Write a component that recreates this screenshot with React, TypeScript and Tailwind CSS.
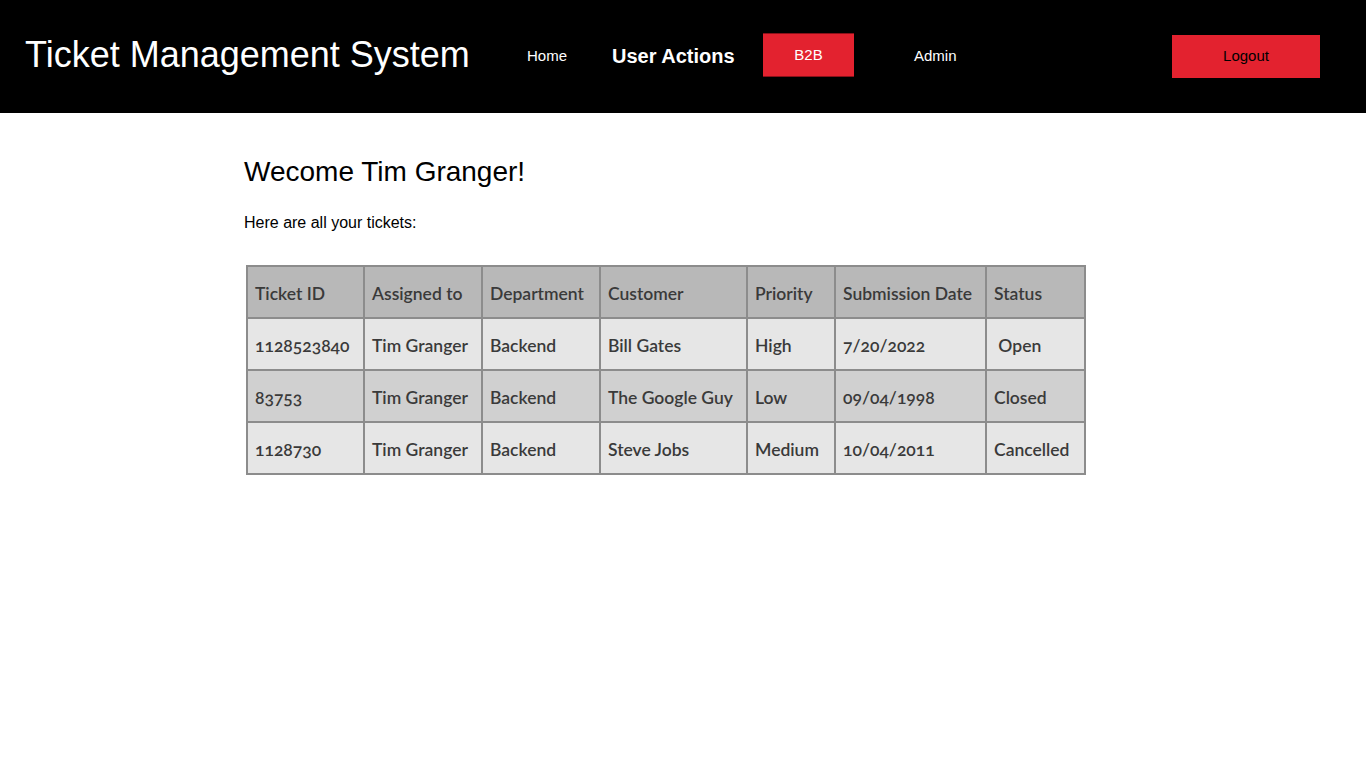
import React from "react";

const rows = [
  ["1128523840", "Tim Granger", "Backend", "Bill Gates", "High", "7/20/2022", " Open"],
  ["83753", "Tim Granger", "Backend", "The Google Guy", "Low", "09/04/1998", "Closed"],
  ["1128730", "Tim Granger", "Backend", "Steve Jobs", "Medium", "10/04/2011", "Cancelled"],
];
const head = ["Ticket ID", "Assigned to", "Department", "Customer", "Priority", "Submission Date", "Status"];
const widths = [117, 118, 118, 147, 88, 151, 99];
const rowBg = ["bg-[#e6e6e6]", "bg-[#d0d0d0]", "bg-[#e6e6e6]"];

export default function App() {
  return (
    <div className="min-h-screen bg-white font-['Liberation_Sans',Arial,sans-serif]">
      <header className="h-[113px] bg-black flex items-center text-white">
        <h1 className="ml-[25px] text-[36px] leading-none pb-[4px] w-[502px]">Ticket Management System</h1>
        <a className="text-[15px] w-[85px]">Home</a>
        <a className="text-[20px] font-bold w-[151px] pb-[2px]">User Actions</a>
        <button className="w-[91px] h-[44px] bg-[#e3222f] border-y border-[#8a1119] text-[15px] text-white mb-[3px]">B2B</button>
        <a className="text-[15px] ml-[60px]">Admin</a>
        <button className="ml-auto mr-[46px] w-[148px] h-[43px] bg-[#e3222f] text-[15px] text-black mb-[1px]">Logout</button>
      </header>
      <main className="pl-[244px] pt-[45px]">
        <h2 className="text-[28px] leading-none">Wecome Tim Granger!</h2>
        <p className="text-[16px] mt-[25px]">Here are all your tickets:</p>
        <table className="mt-[30px] ml-[2px] border-collapse font-['Lato',sans-serif] font-semibold text-[17.5px] text-[#3a3a3a] oldstyle-nums">
          <thead>
            <tr className="bg-[#b8b8b8]">
              {head.map((h, i) => (
                <th key={h} style={{ width: widths[i] }} className="h-[52px] border-2 border-[#8c8c8c] text-left font-semibold px-[7px] pt-[4px]">
                  {h}
                </th>
              ))}
            </tr>
          </thead>
          <tbody>
            {rows.map((r, ri) => (
              <tr key={ri} className={rowBg[ri]}>
                {r.map((c, ci) => (
                  <td key={ci} className="h-[52px] border-2 border-[#8c8c8c] px-[7px] pt-[4px] whitespace-pre">
                    {c}
                  </td>
                ))}
              </tr>
            ))}
          </tbody>
        </table>
      </main>
    </div>
  );
}
